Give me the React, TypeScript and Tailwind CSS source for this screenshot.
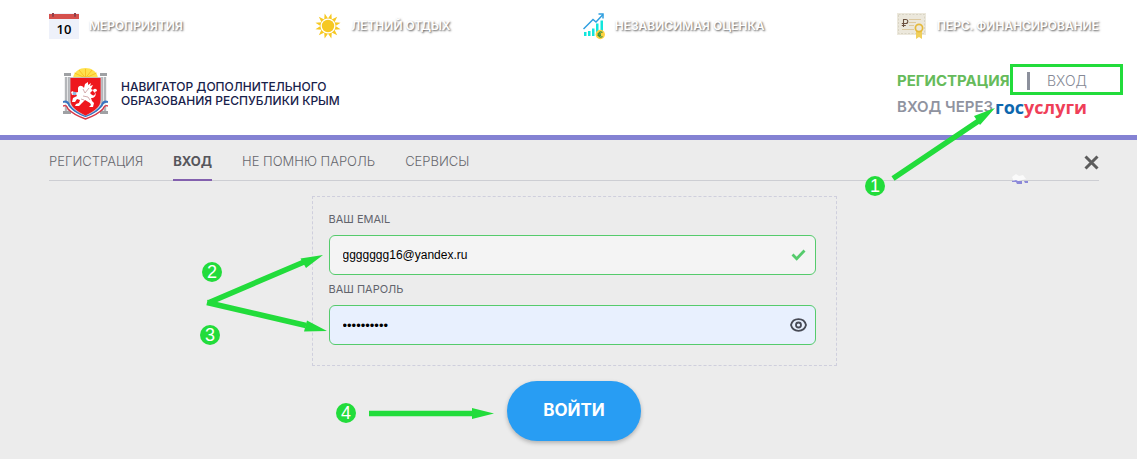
import React from 'react';

const navItems: { id: string; label: string; icon: React.ReactNode }[] = [
  { id: 'events', label: 'МЕРОПРИЯТИЯ', icon: <CalendarIcon /> },
  { id: 'summer', label: 'ЛЕТНИЙ ОТДЫХ', icon: <SunIcon /> },
  { id: 'rating', label: 'НЕЗАВИСИМАЯ ОЦЕНКА', icon: <GrowthIcon /> },
  { id: 'funding', label: 'ПЕРС. ФИНАНСИРОВАНИЕ', icon: <CertificateIcon /> },
];

const tabs = [
  { id: 'register', label: 'РЕГИСТРАЦИЯ' },
  { id: 'login', label: 'ВХОД' },
  { id: 'forgot', label: 'НЕ ПОМНЮ ПАРОЛЬ' },
  { id: 'services', label: 'СЕРВИСЫ' },
];

function CalendarIcon() {
  return (
    <span className="relative flex h-[26px] w-[30px] items-end justify-center bg-[#eef1fa]">
      <svg className="absolute inset-x-0 top-0" width="30" height="6" viewBox="0 0 30 6" aria-hidden="true">
        <path d="M0 1h30v5H0z" fill="#d5504c" />
        <path d="M3 0h2v3a1 1 0 0 1-2 0zM25 0h2v3a1 1 0 0 1-2 0z" fill="#8f3f4a" />
      </svg>
      <span className="font-['Open_Sans',sans-serif] text-[13px] leading-5 font-semibold text-black">10</span>
    </span>
  );
}

function SunIcon() {
  const rays = Array.from({ length: 12 }, (_, i) => i * 30 + 15);
  return (
    <svg width="26" height="26" viewBox="0 0 26 26" fill="#f6c823" aria-hidden="true">
      <circle cx="13" cy="13" r="6.2" />
      {rays.map(angle => (
        <path key={angle} d="M11 5.8 13 0l2 5.8a7.4 7.4 0 0 0-4 0z" transform={`rotate(${angle} 13 13)`} />
      ))}
    </svg>
  );
}

function GrowthIcon() {
  return (
    <svg width="22" height="27" viewBox="0 0 22 27" fill="none" aria-hidden="true">
      <path d="M1 19h2.500v4H1zM5 18h2.500v5H5zM9 15.500h2.500V23H9zM13 10.500h2.500V23H13zM17.500 7.500H20V23h-2.500z" fill="#12e6dc" />
      <path d="m.5 16 9.500-9.500 3 2.500L20 1.500" stroke="#2f9fe0" strokeWidth="1.500" />
      <path d="M15.500 1H20v4.500" stroke="#2f9fe0" strokeWidth="1.500" />
      <circle cx="17.300" cy="21.500" r="4.700" fill="#ffd23f" />
      <path d="M19.500 19.500c-2.500-1.600-4 0-4 2s1.600 3.600 4 2M14.500 20.800h3.500M14.500 22.400h3.500" stroke="#3d9140" strokeWidth="1.200" />
    </svg>
  );
}

function CertificateIcon() {
  return (
    <svg width="30" height="27" viewBox="0 0 30 27" fill="none" aria-hidden="true">
      <path d="M0 0h29v22H0z" fill="#ece8dc" />
      <path d="M1.500 1.500h26v19h-26z" stroke="#d9d4c4" strokeDasharray="2 1.500" />
      <path d="M6.500 14V6.500h2.300a2 2 0 0 1 0 4H4.800M4.800 12.500h4" stroke="#6b5140" strokeWidth="1.100" />
      <path d="M12 6.500h12M12 9.500h7M5 16.500h12M12 12.500h5" stroke="#ddc9a0" />
      <path d="M19 17v9l3-2 3 2v-9z" fill="#f0cf5a" />
      <circle cx="22" cy="15" r="3.600" fill="#ece8dc" stroke="#e5b93b" strokeWidth="1.700" />
    </svg>
  );
}

function CoatOfArms() {
  return (
    <svg width="45" height="52" viewBox="0 0 45 52" fill="none" aria-hidden="true">
      <path d="M10 10C11 3 17 0 22.500 0S34 3 35 10z" fill="#ffe14d" />
      <path d="M22.500 10V1M22.500 10 16 2M22.500 10 29 2M22.500 10l-11-5M22.500 10l11-5" stroke="#f7b91c" strokeWidth=".8" />
      <path d="M3 9v35M6 9v35M39 9v35M42 9v35" stroke="#b4b6b9" strokeWidth="2.400" />
      <path d="M4.500 9v35M40.500 9v35" stroke="#e4e5e6" />
      <path d="M1 5h7v3H1zM37 5h7v3h-7zM0 43h8v3H0zM37 43h8v3h-8z" fill="#9fa1a4" />
      <path d="M7 9.500h31V32c0 7-6 11-15.500 16C13 43 7 39 7 32z" fill="#ee171d" stroke="#c7ccd2" strokeWidth=".8" />
      <path d="M0 34c3-1 5 0 6 3 4 6 9 9 16.500 12C30 46 35 43 39 37c1-3 3-4 6-3" stroke="#3975c2" strokeWidth="2" />
      <path d="M0 36c3-1 4 0 5 3 4 5 9 8 17.500 11C31 47 36 44 40 39c1-3 3-4 5-3" stroke="#fff" strokeWidth="1.400" />
      <path d="M0 38c3-1 4 0 5 3 4 4 9 7 17.500 10C31 48 36 45 40 41c1-3 3-4 5-3" stroke="#d73747" strokeWidth="1.400" />
      <path
        d="M15 20c1-3 4-3 6 0l1-4 3-2v3l3-2-1 3 3-1-2 4 2 1-3 3 2 2c2 1 3 0 3-2l-2-2c0-3 4-3 4 0l-2 1c2 4-1 6-4 6l1 3 2 2-1 4h-4l2-2-1-2-5-3-3 3-3 3h-4l1-2 3-1 1-3-3-1-2 3h-3l1-4 4-2-1-2-4 1-1-3 2-1 1 2 4-1v-2z"
        fill="#fff"
      />
      <path d="m20 21 2 4 4-5M20 28l5 1 2 3M18 31l3 1" stroke="#c08a8d" strokeWidth=".7" />
      <circle cx="11.500" cy="25.500" r="1.800" fill="#8bbbe5" />
    </svg>
  );
}

function CloseIcon() {
  return (
    <svg width="15" height="15" viewBox="0 0 15 15" aria-hidden="true">
      <path d="m1.500 1.500 12 12M13.500 1.500l-12 12" stroke="#5c5c5c" strokeWidth="3" />
    </svg>
  );
}

function TopNav() {
  return (
    <nav className="flex items-start justify-between pt-3 pr-[38px] pl-[49px]">
      {navItems.map(item => (
        <a key={item.id} href={`#${item.id}`} className="flex h-7 items-center gap-[10px]">
          {item.icon}
          <span className="text-xs leading-4 font-semibold whitespace-nowrap text-white [text-shadow:1px_1px_2px_#555]">
            {item.label}
          </span>
        </a>
      ))}
    </nav>
  );
}

function Header() {
  return (
    <header className="flex justify-between border-b-5 border-[#8482d3] pt-7 pr-[50px] pb-[15px] pl-[63px]">
      <a href="#home" className="flex items-center gap-[13px]">
        <CoatOfArms />
        <span className="text-xs leading-[14px] font-medium text-[#17214a]">
          НАВИГАТОР ДОПОЛНИТЕЛЬНОГО
          <br />
          ОБРАЗОВАНИЯ РЕСПУБЛИКИ КРЫМ
        </span>
      </a>
      <div className="flex w-[190px] flex-col">
        <div className="flex h-[26px] items-center justify-between">
          <a href="#register" className="text-[15px] font-bold text-[#66bb5b]">РЕГИСТРАЦИЯ</a>
          <span className="h-[18px] w-[3px] bg-[#8c909c]" />
          <a href="#login" className="text-sm font-light text-[#858995]">ВХОД</a>
        </div>
        <a href="#gosuslugi" className="flex h-[26px] items-center justify-between whitespace-nowrap">
          <span className="text-[15px] font-semibold text-[#8f939f]">ВХОД ЧЕРЕЗ</span>
          <span className="font-['Open_Sans',sans-serif] text-lg leading-6 font-bold text-[#ef3f58]">
            <span className="text-[#0d67ae]">гос</span>услуги
          </span>
        </a>
      </div>
    </header>
  );
}

function LoginForm() {
  return (
    <form className="flex flex-col items-center pt-[15px]" onSubmit={e => e.preventDefault()}>
      <div className="w-1/2 border border-dashed border-[#cfcfdd] pt-4 pr-5 pb-5 pl-4">
        <label htmlFor="email" className="block text-[11px] leading-3 text-[#62646c]">ВАШ EMAIL</label>
        <div className="relative mt-[10px]">
          <input
            id="email"
            type="email"
            defaultValue="ggggggg16@yandex.ru"
            className="h-10 w-full rounded-md border border-[#55cb6c] bg-[#f4f4f4] pr-10 pl-[13px] font-['Liberation_Sans',Arial,sans-serif] text-xs text-black outline-none"
          />
          <svg className="absolute top-[14px] right-[10px]" width="15" height="12" viewBox="0 0 15 12" fill="none" aria-hidden="true">
            <path d="m1.500 5.500 4.200 4.200L13.500 1.500" stroke="#55cb6c" strokeWidth="2.800" />
          </svg>
        </div>
        <label htmlFor="password" className="mt-2 block text-[11px] leading-3 text-[#62646c]">ВАШ ПАРОЛЬ</label>
        <div className="relative mt-[10px]">
          <input
            id="password"
            type="password"
            defaultValue="navigator1"
            className="h-10 w-full rounded-md border border-[#55cb6c] bg-[#e8f0fe] pr-10 pl-[13px] font-['Liberation_Sans',Arial,sans-serif] text-[13px] text-black outline-none"
          />
          <button type="button" aria-label="Показать пароль" className="absolute top-[13px] right-[9px]">
            <svg width="17" height="14" viewBox="0 0 17 14" fill="none" stroke="#474a55" strokeWidth="1.800" aria-hidden="true">
              <path d="M1 7c1-4 4.500-5.800 7.500-5.800S15 3 16 7c-1 4-4.500 5.800-7.500 5.800S2 11 1 7z" />
              <circle cx="8.500" cy="7" r="2.500" />
            </svg>
          </button>
        </div>
      </div>
      <button
        type="submit"
        className="mt-[15px] h-[60px] rounded-[30px] bg-[#289df3] px-9 text-[17px] font-bold text-white shadow-[0_2px_4px_rgba(0,0,0,0.25)]"
      >
        ВОЙТИ
      </button>
    </form>
  );
}

function Step({ value, className }: { value: number; className: string }) {
  return (
    <span
      className={`absolute flex h-5 w-5 items-center justify-center rounded-full bg-[#22dc3b] font-['Liberation_Sans',Arial,sans-serif] text-lg leading-5 text-white ${className}`}
    >
      {value}
    </span>
  );
}

// Numbered hints drawn over the page
function Guide() {
  return (
    <div className="pointer-events-none absolute inset-0">
      <svg className="absolute top-0 left-0" width="1137" height="459" viewBox="0 0 1137 459" fill="#22dc3b">
        <path d="M1011.500 65.500h110v28h-110z" fill="none" stroke="#22dc3b" strokeWidth="3" />
        <path d="M893 178.500 980 120M208 303l96-41M207 302.500l99 23M369 413.500h104" fill="none" stroke="#22dc3b" strokeWidth="5.500" />
        <path d="m995 108-21 8 6 9zM323 255l-22.500 3.500 5.500 9.500zM327 331l-20-10.500-3 11zM494 413.500 472 408v11z" />
        {/* stray ink mark by the divider */}
        <path d="m1012 177 4-3 3 2 4-1 3 4-12 3z" fill="#fafafa" />
        <path d="m1012 181 4-1 2 1h4v3h-5l-1-2h-4zM1024 181h4v2h-3z" fill="#7471d3" opacity=".8" />
      </svg>
      <Step value={1} className="top-[176px] left-[865px]" />
      <Step value={2} className="top-[262px] left-[202px]" />
      <Step value={3} className="top-[325px] left-[200px]" />
      <Step value={4} className="top-[403px] left-[336px]" />
    </div>
  );
}

export default function App() {
  return (
    <div className="relative flex min-h-screen flex-col bg-white font-['Inter',sans-serif]">
      <TopNav />
      <Header />
      <main className="flex-1 bg-[#ececec] pr-[38px] pb-[18px] pl-[49px]">
        <div className="flex h-[41px] items-stretch justify-between border-b border-[#cdced3]">
          <div className="flex gap-[30px]">
            {tabs.map(tab => (
              <button
                key={tab.id}
                type="button"
                className={`-mb-px border-b-2 pt-1 text-[13px] ${
                  tab.id === 'login'
                    ? 'border-[#8360ae] font-bold text-[#56565c]'
                    : 'border-transparent font-light text-[#66676d]'
                }`}
              >
                {tab.label}
              </button>
            ))}
          </div>
          <button type="button" aria-label="Закрыть" className="pt-1">
            <CloseIcon />
          </button>
        </div>
        <LoginForm />
      </main>
      <Guide />
    </div>
  );
}
